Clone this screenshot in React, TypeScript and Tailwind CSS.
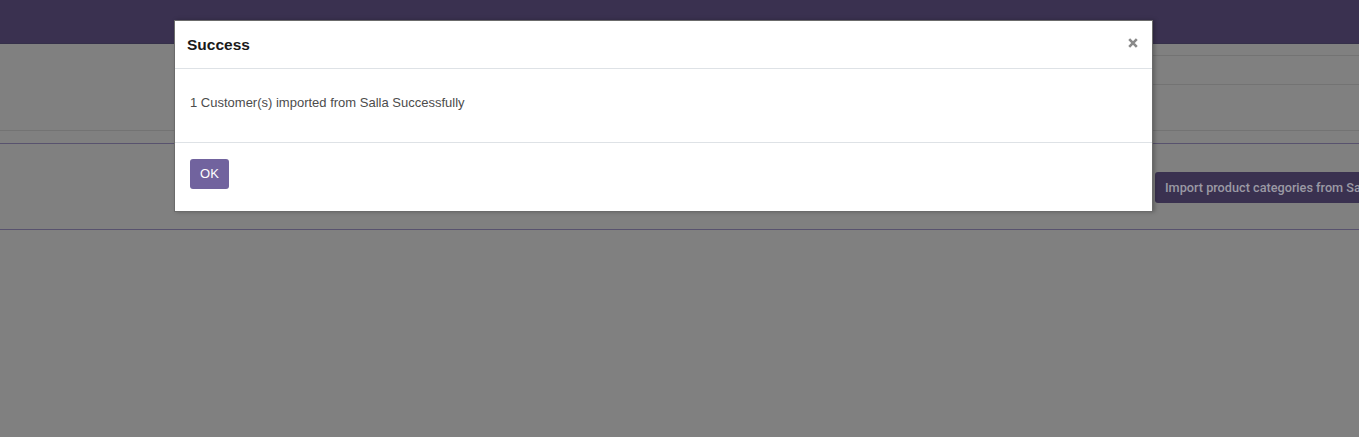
import React from 'react';

export default function App() {
  return (
    <div className="relative w-[1359px] h-[437px] overflow-hidden bg-[#808080] font-['Liberation_Sans',Arial,sans-serif]">
      {/* Navbar (dimmed by the modal backdrop) */}
      <div className="h-[44px] bg-[#3a3150] border-b border-[#35304a]" />

      {/* Control panel */}
      <div className="h-[87px] flex flex-col border-b border-[#737373]">
        <div className="h-[11px]" />
        <div className="ml-[640px] h-[29px] border-t border-[#737373]" />
        <div className="ml-[640px] flex-1 border-t border-[#737373]" />
      </div>

      {/* Form sheet area */}
      <div className="mt-[12px] h-[87px] border-y border-[#58526e] flex items-start">
        <button className="shrink-0 mt-[28px] ml-[1155px] h-[31px] pl-[10px] pr-[10px] rounded-[3px] bg-[#3a3150] text-[#9a99a4] text-[12.7px] font-medium whitespace-nowrap font-['Roboto',sans-serif]">
          Import product categories from Salla
        </button>
      </div>

      {/* Modal dialog */}
      <div className="absolute left-[174px] top-[20px] w-[979px] h-[192px] bg-white border border-[#6b6b6b] shadow-[2px_0_4px_rgba(0,0,0,0.25)] flex flex-col">
        <div className="h-[48px] flex items-center justify-between pl-[12px] pr-[12px] border-b border-[#dee2e6]">
          <h4 className="text-[15.5px] font-bold text-[#1a1a1a]">Success</h4>
          <svg width="10" height="10" viewBox="0 0 10 10" className="mr-[2px] -mt-[4px]">
            <path d="M1.2 1.2 L8.8 8.8 M8.8 1.2 L1.2 8.8" stroke="#8a8a8a" strokeWidth="2.6" strokeLinecap="butt" />
          </svg>
        </div>
        <div className="h-[74px] border-b border-[#dee2e6] pl-[15px] pt-[24px] text-[13px] text-[#4c4c4c]">
          1 Customer(s) imported from Salla Successfully
        </div>
        <div className="flex-1 pl-[15px] pt-[16px]">
          <button className="h-[30px] w-[39px] rounded-[3px] bg-[#71639e] text-white text-[13px]">OK</button>
        </div>
      </div>
    </div>
  );
}
